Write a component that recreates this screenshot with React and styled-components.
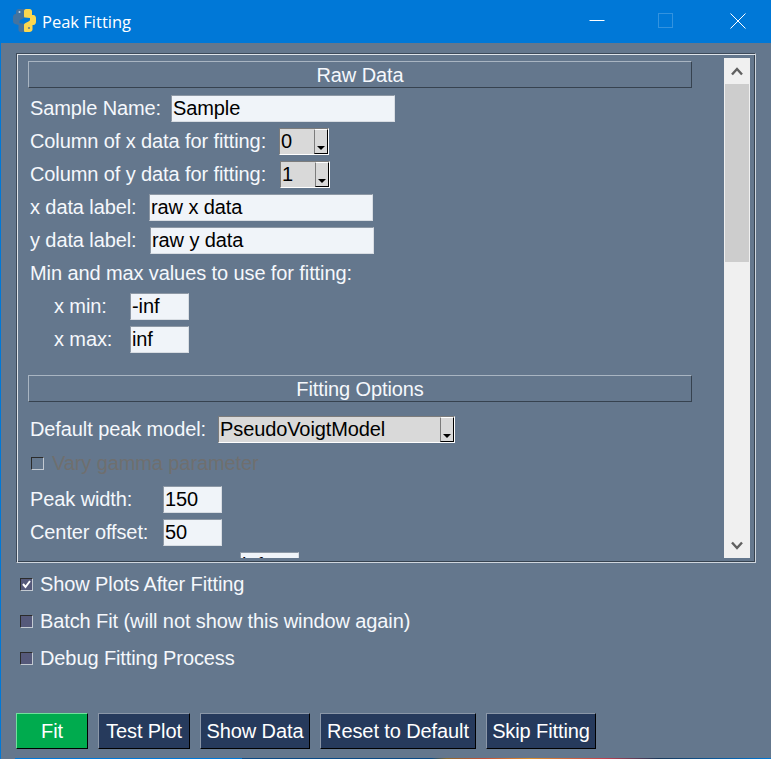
import React from "react";
import styled, { createGlobalStyle } from "styled-components";

const Global = createGlobalStyle`
  html, body { margin: 0; padding: 0; background: #64778d; }
  * { box-sizing: border-box; }
`;

const Window = styled.div`
  width: 771px; height: 759px; overflow: hidden;
  display: flex; flex-direction: column;
  background: #64778d;
  border-left: 1px solid #0078d7;
  font-family: "Liberation Sans", Arial, sans-serif;
  font-size: 20px; letter-spacing: -0.1px; color: #f5f8fc;
`;
const TitleBar = styled.div`
  height: 43px; flex: none; background: #0078d7;
  display: flex; align-items: center; color: #fff;
`;
const TitleIcon = styled.svg`width: 23px; height: 23px; margin-left: 12px; margin-bottom: 2px; flex: none;`;
const TitleText = styled.div`
  font-family: "Open Sans", "Noto Sans", sans-serif; font-size: 16.5px; letter-spacing: 0; margin-left: 6px; flex: 1;
`;
const WinBtn = styled.div`
  width: ${p => p.$w}px; height: 43px; flex: none; padding-bottom: 1px;
  display: flex; align-items: center; justify-content: center;
`;
const Body = styled.div`
  flex: 1; display: flex; flex-direction: column; padding: 10px 0 0 15px;
`;
const Frame = styled.div`
  width: 740px; height: 510px; flex: none;
  border: 1px solid #cfd6de; border-top-color: #3d4a5a; border-left-color: #3d4a5a;
  box-shadow: inset 1px 1px 0 #dfe4ea, inset -1px -1px 0 #36424f;
  padding: 4px 5px 4px 0;
  display: flex; justify-content: space-between;
`;
const Scroller = styled.div`
  width: 706px; height: 500px; overflow: hidden;
  padding: 3px 0 0 11px;
`;
const Section = styled.div`
  width: 664px; height: 27px; padding-top: 1px;
  display: flex; align-items: center; justify-content: center;
  border: 1px solid; border-color: #a9b5c2 #36424f #36424f #a9b5c2;
`;
const Spacing = styled.div`height: ${p => p.$h}px;`;
const Row = styled.div`
  height: 33px; display: flex; align-items: center;
  padding-left: ${p => p.$indent || 2}px;
  white-space: nowrap;
`;
const Label = styled.span`
  width: ${p => p.$w ? p.$w + "px" : "auto"}; flex: none;
  padding-top: ${p => p.$drop || 0}px;
`;
const Input = styled.div`
  width: ${p => p.$w}px; height: 27px; flex: none;
  background: #f0f4f9; color: #000; padding-left: 1px;
  display: flex; align-items: center;
  border: 1px solid; border-color: #8d98a5 #d8dde3 #d8dde3 #8d98a5;
`;
const Combo = styled.div`
  width: ${p => p.$w}px; height: 27px; flex: none; margin-bottom: 1px;
  background: #d9d9d9; color: #000; display: flex; align-items: stretch; padding-left: 1px;
  border: 1px solid; border-color: #7c7c7c #fff #fff #7c7c7c;
`;
const ComboText = styled.div`flex: 1; display: flex; align-items: center;`;
const ComboBtn = styled.div`
  width: 14px; flex: none; background: #d9d9d9; position: relative;
  border: 1px solid; border-color: #fff #000 #000 #7c7c7c;
  &::after {
    content: ""; position: absolute; left: 2px; bottom: 3px;
    border-top: 4px solid #000; border-left: 4px solid transparent; border-right: 4px solid transparent;
  }
`;
const ScrollBar = styled.div`
  width: 26px; height: 500px; flex: none; background: #f0f0f0;
  display: flex; flex-direction: column; align-items: center;
`;
const ScrollArrow = styled.div`
  height: 26px; width: 100%; flex: none; display: flex; align-items: center; justify-content: center;
`;
const Thumb = styled.div`width: 24px; height: 178px; flex: none; background: #cdcdcd;`;
const ScrollGap = styled.div`flex: 1;`;
const CheckRow = styled.div`
  display: flex; align-items: center; height: 37px; padding-left: 4px;
`;
const Box = styled.div`
  width: 13px; height: 13px; flex: none; margin-right: ${p => p.$off ? 8 : 7}px; position: relative;
  background: ${p => p.$off ? "#64778d" : "#55597a"};
  border: 1px solid; border-color: #2b2b2b #c3cad2 #c3cad2 #2b2b2b;
  display: flex; align-items: center; justify-content: center;
`;
const Disabled = styled.span`color: #6f6f6f;`;
const Buttons = styled.div`display: flex; gap: 10px; margin-top: 36px;`;
const Button = styled.div`
  height: 36px; width: ${p => p.$w}px; flex: none;
  display: flex; align-items: center; justify-content: center;
  background: ${p => p.$go ? "#00ab4e" : "#263a5c"};
  color: #fff; white-space: nowrap;
  border: 1px solid; border-color: ${p => p.$go ? "#70e09c #000 #000 #70e09c" : "#8b97a8 #000 #000 #8b97a8"};
`;
const Desktop = styled.div`
  height: 1px; flex: none; margin: auto -1px 0 -1px;
  background: linear-gradient(90deg, #0078d7 0 30%, #0b4a86 30% 55%, #8a6a30 57%, #c0503a 62%, #d89030 68%, #c04050 78%, #1a3a5c 85%, #0078d7 100%);
`;

const Check = () => (
  <svg width="11" height="11" viewBox="0 0 11 11"><path d="M2 5l2.5 3L9 2" fill="none" stroke="#fff" strokeWidth="2"/></svg>
);
const Up = () => (
  <svg width="12" height="9" viewBox="0 0 12 9"><path d="M1 7.5L6 2l5 5.5" fill="none" stroke="#606060" strokeWidth="2.4"/></svg>
);
const Down = () => (
  <svg width="12" height="9" viewBox="0 0 12 9"><path d="M1 1.5L6 7l5-5.5" fill="none" stroke="#606060" strokeWidth="2.4"/></svg>
);

export default function App() {
  return (
    <Window>
      <Global />
      <TitleBar>
        <TitleIcon viewBox="0 0 23 23">
          <path d="M6 0h5c1 0 1.500 .5 1.500 1.500V7c0 1-.5 1.500-1.500 2L8 10.500c-1 .5-1.500 1-1.500 2V14l5 1c.5 0 1 .5 1 1.500V21c0 1-1 2-2.500 2H8c-1.500 0-2.500-1-2.500-2v-5L2 15c-1.200-.3-2-1.500-2-3V8c0-1.500 1-3 2.500-3H3V2.500C3 1 4.500 0 6 0z" fill="#44739f"/>
          <path d="M13 0h3.500C18 0 19 1 19 2.500V6h1.500C22 6 23 7.500 23 9v4c0 1.500-1 3-2.500 3H19.500v4.500c0 1.500-1.500 2.500-3 2.500h-4c-1 0-1.500-.5-1.500-1.500V16c0-1 .5-1.500 1.500-2l3-1.500c1-.5 1.500-1 1.500-2V9l-5-.5c-.5 0-1-.5-1-1.500V2c0-1 1-2 2-2z" fill="#fbd74f"/>
          <circle cx="6.500" cy="3" r="1" fill="#c4d8ea"/><circle cx="16" cy="19" r="1.100" fill="#5f7e8e"/>
        </TitleIcon>
        <TitleText>Peak Fitting</TitleText>
        <WinBtn $w={61}>
          <svg width="16" height="16" viewBox="0 0 16 16"><path d="M0.500 7.500h15" stroke="#fff" fill="none"/></svg>
        </WinBtn>
        <WinBtn $w={77}>
          <svg width="16" height="16" viewBox="0 0 16 16"><rect x="0.500" y="0.500" width="14" height="14" stroke="#3393df" fill="none"/></svg>
        </WinBtn>
        <WinBtn $w={67}>
          <svg width="16" height="16" viewBox="0 0 16 16"><path d="M0.500 0.500l15 15M15.500 0.500l-15 15" stroke="#fff" fill="none"/></svg>
        </WinBtn>
      </TitleBar>
      <Body>
        <Frame>
          <Scroller>
            <Section>Raw Data</Section>
            <Spacing $h={4} />
            <Row><Label $w={141}>Sample Name:</Label><Input $w={224}>Sample</Input></Row>
            <Row><Label $w={249}>Column of x data for fitting:</Label><Combo $w={50}><ComboText>0</ComboText><ComboBtn /></Combo></Row>
            <Row><Label $w={250}>Column of y data for fitting:</Label><Combo $w={50}><ComboText>1</ComboText><ComboBtn /></Combo></Row>
            <Row><Label $w={119}>x data label:</Label><Input $w={224}>raw x data</Input></Row>
            <Row><Label $w={120}>y data label:</Label><Input $w={224}>raw y data</Input></Row>
            <Row>Min and max values to use for fitting:</Row>
            <Row $indent={26}><Label $w={76}>x min:</Label><Input $w={59}>-inf</Input></Row>
            <Row $indent={26}><Label $w={76}>x max:</Label><Input $w={59}>inf</Input></Row>
            <Spacing $h={19} />
            <Section>Fitting Options</Section>
            <Spacing $h={11} />
            <Row><Label $w={188}>Default peak model:</Label><Combo $w={237}><ComboText>PseudoVoigtModel</ComboText><ComboBtn /></Combo></Row>
            <Spacing $h={1} />
            <Row $indent={3}><Box $off /><Disabled>Vary gamma parameter</Disabled></Row>
            <Spacing $h={3} />
            <Row><Label $w={133}>Peak width:</Label><Input $w={59}>150</Input></Row>
            <Row><Label $w={133}>Center offset:</Label><Input $w={59}>50</Input></Row>
            <Row><Label $w={210} $drop={2}>Maximum sigma value:</Label><Input $w={59}>inf</Input></Row>
          </Scroller>
          <ScrollBar>
            <ScrollArrow><Up /></ScrollArrow>
            <Thumb />
            <ScrollGap />
            <ScrollArrow><Down /></ScrollArrow>
          </ScrollBar>
        </Frame>
        <Spacing $h={3} />
        <CheckRow><Box><Check /></Box>Show Plots After Fitting</CheckRow>
        <CheckRow><Box />Batch Fit (will not show this window again)</CheckRow>
        <CheckRow><Box />Debug Fitting Process</CheckRow>
        <Buttons>
          <Button $go $w={72}>Fit</Button>
          <Button $w={92}>Test Plot</Button>
          <Button $w={110}>Show Data</Button>
          <Button $w={156}>Reset to Default</Button>
          <Button $w={110}>Skip Fitting</Button>
        </Buttons>
        <Desktop />
      </Body>
    </Window>
  );
}
